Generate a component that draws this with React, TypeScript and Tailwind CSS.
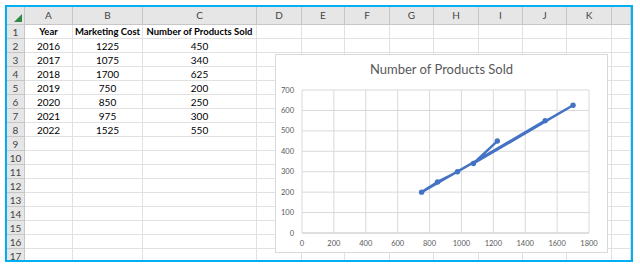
import React from "react";

const colLetters = ["A", "B", "C", "D", "E", "F", "G", "H", "I", "J", "K", ""];
const data: (string | number)[][] = [
  ["Year", "Marketing Cost", "Number of Products Sold"],
  [2016, 1225, 450],
  [2017, 1075, 340],
  [2018, 1700, 625],
  [2019, 750, 200],
  [2020, 850, 250],
  [2021, 975, 300],
  [2022, 1525, 550],
];

const pts: [number, number][] = [
  [1225, 450],
  [1075, 340],
  [1700, 625],
  [750, 200],
  [850, 250],
  [975, 300],
  [1525, 550],
];

// svg origin in page coords (below the chart title)
const OX = 276;
const OY = 80;
const px = (v: number) => 302 + (v * 287) / 1800 - OX;
const py = (v: number) => 232 - (v * 143) / 700 - OY;

function Chart() {
  const yTicks = [0, 100, 200, 300, 400, 500, 600, 700];
  const xTicks = [0, 200, 400, 600, 800, 1000, 1200, 1400, 1600, 1800];
  const d = pts.map((p, i) => `${i === 0 ? "M" : "L"}${px(p[0]).toFixed(1)} ${py(p[1]).toFixed(1)}`).join(" ");
  return (
    <div className="absolute left-[268px] top-[47px] w-[333px] h-[199px] bg-white border border-[#d9d9d9] flex flex-col">
      <div className="pt-[8px] h-[26px] text-center text-[13px] text-[#595959] leading-none">Number of Products Sold</div>
      <svg width={331} height={171} viewBox="0 0 331 171">
        {yTicks.map((t) => (
          <line key={"h" + t} x1={px(0)} x2={px(1800)} y1={py(t)} y2={py(t)} stroke={t === 0 ? "#bfbfbf" : "#d9d9d9"} strokeWidth={1} />
        ))}
        {xTicks.map((t) => (
          <line key={"v" + t} x1={px(t)} x2={px(t)} y1={py(700)} y2={py(0)} stroke="#d9d9d9" strokeWidth={1} />
        ))}
        {yTicks.map((t) => (
          <text key={"yl" + t} x={px(0) - 8} y={py(t) + 2.5} textAnchor="end" fontSize={7.5} fill="#595959" fontFamily="Lato, 'Open Sans', sans-serif">
            {t}
          </text>
        ))}
        {xTicks.map((t) => (
          <text key={"xl" + t} x={px(t)} y={py(0) + 13} textAnchor="middle" fontSize={7.5} fill="#595959" fontFamily="Lato, 'Open Sans', sans-serif">
            {t}
          </text>
        ))}
        <path d={d} fill="none" stroke="#4472c4" strokeWidth={2.4} strokeLinejoin="round" />
        {pts.map((p, i) => (
          <circle key={i} cx={px(p[0])} cy={py(p[1])} r={2.7} fill="#4472c4" />
        ))}
      </svg>
    </div>
  );
}

export default function App() {
  const rows = Array.from({ length: 17 }, (_, i) => i + 1);
  return (
    <div className="w-[640px] h-[270px] bg-white p-[5px] pr-[7px] pb-[8px]" style={{ fontFamily: "Lato, 'Open Sans', sans-serif" }}>
      <div className="w-full h-full border-2 border-[#00b0f0]">
        <div className="relative w-full h-full overflow-hidden">
          <div className="grid grid-cols-[18px_48px_70px_114px_45px_43px_45px_44px_45px_44px_44px_45px_1fr] grid-rows-[18px_repeat(17,14px)]">
            <div className="relative bg-[#e6e6e6] border-r border-b border-[#c6c6c6] flex items-end justify-end p-[2px]">
              <svg width={8} height={8} viewBox="0 0 8 8">
                <polygon points="8,0 8,8 0,8" fill="#2e8b45" />
              </svg>
            </div>
            {colLetters.map((c, i) => (
              <div key={"c" + i} className="bg-[#e6e6e6] border-r border-b border-[#c6c6c6] flex items-center justify-center text-[10px] text-[#444444]">
                {c}
              </div>
            ))}
            {rows.map((r) => (
              <React.Fragment key={"r" + r}>
                <div className="bg-[#e6e6e6] border-r border-b border-[#c6c6c6] flex items-center justify-center text-[10px] text-[#444444] leading-none">
                  {r}
                </div>
                {colLetters.map((_, ci) => {
                  const v = r <= 8 && ci < 3 ? data[r - 1][ci] : "";
                  return (
                    <div
                      key={"cell" + r + "-" + ci}
                      className={`border-r border-b border-[#e1e1e1] flex items-center justify-center text-black leading-none whitespace-nowrap ${r === 1 ? "font-bold text-[9.5px]" : "text-[10px]"}`}
                    >
                      {v}
                    </div>
                  );
                })}
              </React.Fragment>
            ))}
          </div>
          <Chart />
        </div>
      </div>
    </div>
  );
}
